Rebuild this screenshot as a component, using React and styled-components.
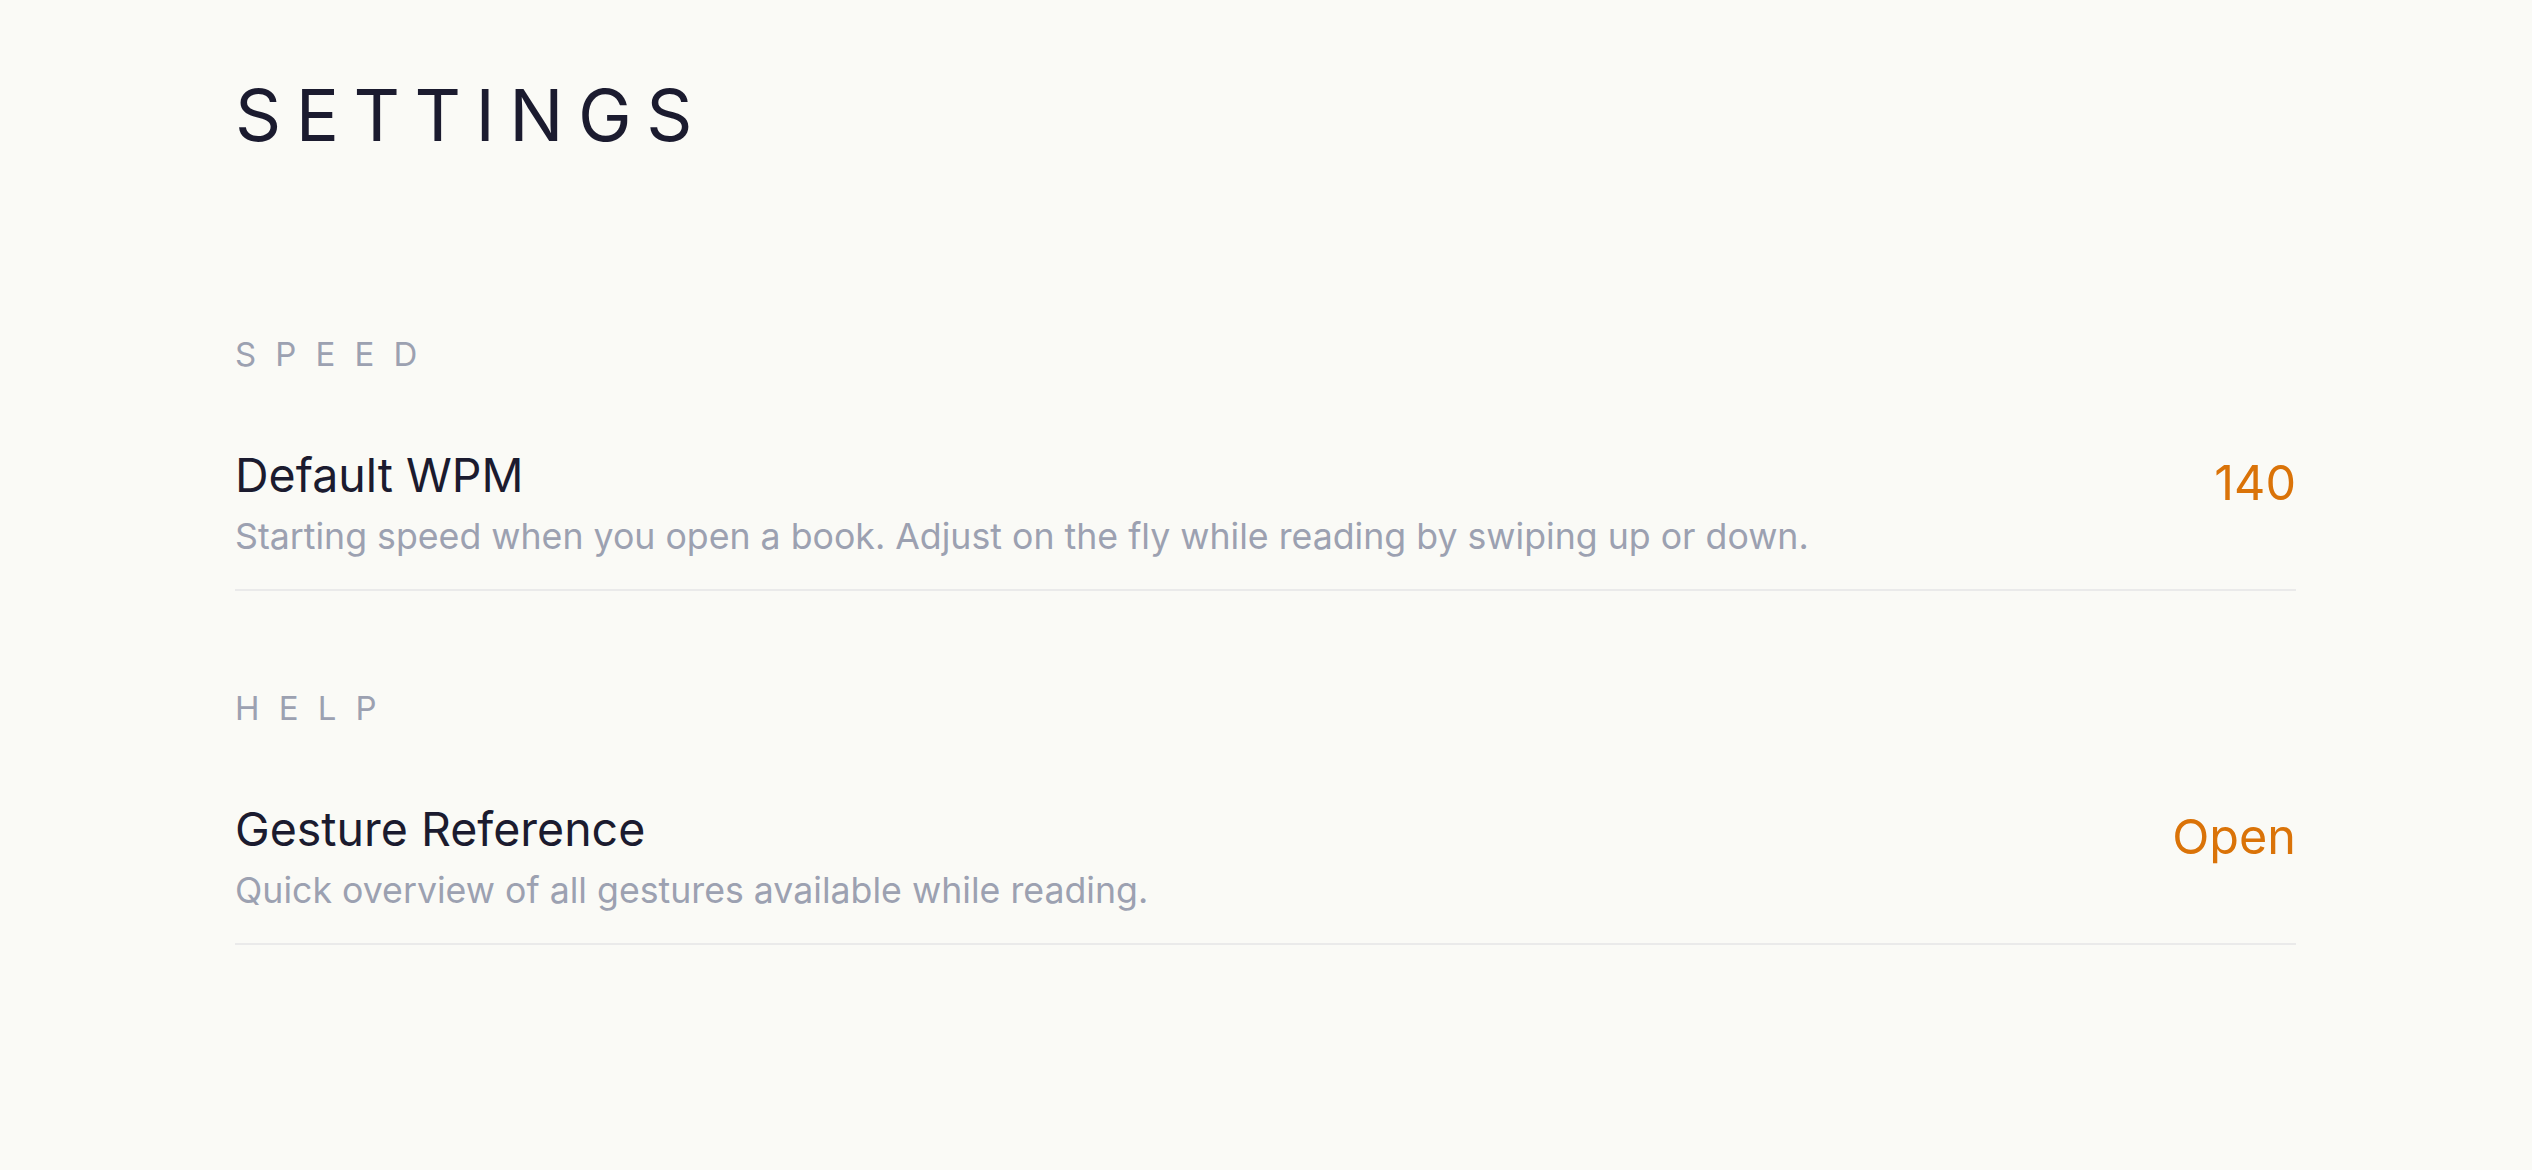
import React from 'react'
import styled, { createGlobalStyle } from 'styled-components'

const GlobalStyle = createGlobalStyle`
html, body {
    margin: 0;
    padding: 0;
    background: #FAFAF6;
}
body {
    font-family: Inter, "Noto Sans", "Liberation Sans", sans-serif;
    -webkit-font-smoothing: antialiased;
}
`

const sections = [
    {
        label: 'Speed',
        rows: [
            {
                title: 'Default WPM',
                desc: 'Starting speed when you open a book. Adjust on the fly while reading by swiping up or down.',
                value: '140',
            },
        ],
    },
    {
        label: 'Help',
        rows: [
            {
                title: 'Gesture Reference',
                desc: 'Quick overview of all gestures available while reading.',
                value: 'Open',
            },
        ],
    },
]

function App() {
    return (
        <>
            <GlobalStyle />
            <Page>
                <Heading>Settings</Heading>
                {sections.map((section, i) => (
                    <Section key={section.label} $first={i === 0}>
                        <SectionLabel>{section.label}</SectionLabel>
                        {section.rows.map((row) => (
                            <Row key={row.title}>
                                <RowText>
                                    <RowTitle>{row.title}</RowTitle>
                                    <RowDesc>{row.desc}</RowDesc>
                                </RowText>
                                <RowValue>{row.value}</RowValue>
                            </Row>
                        ))}
                    </Section>
                ))}
            </Page>
        </>
    )
}

export default App

const Page = styled.div`
min-height: 100vh;
box-sizing: border-box;
padding: 72px 236px 0 235px;
background: #FAFAF6;
`
const Heading = styled.h1`
margin: 0;
font-size: 72px;
font-weight: 400;
line-height: 1.2;
letter-spacing: 14.5px;
text-transform: uppercase;
color: #1B1B2F;
`
const Section = styled.section`
margin-top: ${(props) => (props.$first ? '177px' : '98px')};
`
const SectionLabel = styled.div`
font-size: 33px;
font-weight: 400;
line-height: 1.2;
letter-spacing: 0.58em;
text-transform: uppercase;
color: #9CA1B1;
margin-bottom: 73px;
`
const Row = styled.div`
display: flex;
align-items: flex-start;
justify-content: space-between;
gap: 48px;
padding-bottom: 31px;
border-bottom: 2px solid #EAEAEA;
`
const RowText = styled.div`
display: flex;
flex-direction: column;
gap: 10px;
`
const RowTitle = styled.div`
font-size: 46.5px;
font-weight: 400;
line-height: 1.2;
color: #1B1B2F;
`
const RowDesc = styled.div`
font-size: 35.7px;
font-weight: 400;
line-height: 1.25;
color: #9CA1B1;
`
const RowValue = styled.div`
margin-top: 6px;
font-size: 48.5px;
font-weight: 400;
line-height: 1.2;
color: #DA7308;
`
